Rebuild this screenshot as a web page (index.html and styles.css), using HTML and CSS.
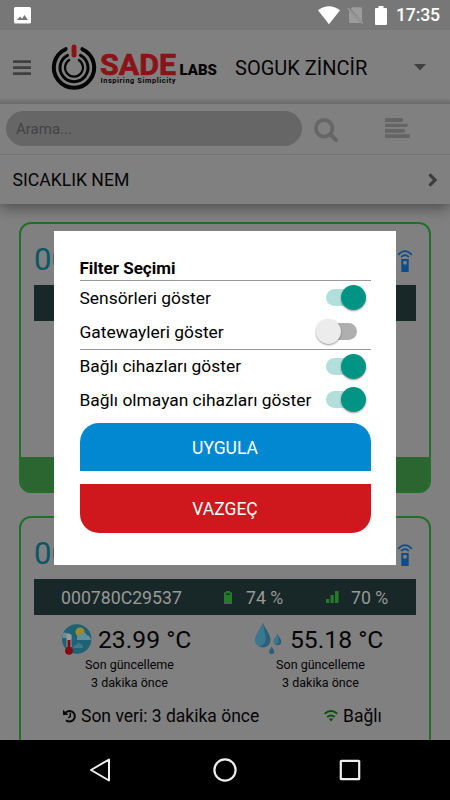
FILE: index.html
```html
<!DOCTYPE html>
<html lang="tr">
<head>
<meta charset="utf-8">
<title>Sade Labs</title>
<link rel="stylesheet" href="styles.css">
</head>
<body>
<svg class="defs" width="0" height="0">
  <symbol id="remote" viewBox="0 0 16 23">
    <path d="M1.2 4.8Q8-2.4 14.8 4.8M4 7Q8 3.2 12 7" fill="none" stroke="#104c8c" stroke-width="1.7"/>
    <path fill-rule="evenodd" fill="#104c8c" d="M4.3 9h7.4v13H4.3zM8 10.8a2 2 0 1 0 0 4a2 2 0 1 0 0-4z"/>
  </symbol>
</svg>
<div class="phone">
  <div class="status">
    <svg class="photo" width="17" height="17" viewBox="0 0 17 17"><rect width="17" height="16.5" rx="1.5" fill="#fff"/><path d="M3 13l3-3.6 2 2.3 2.5-3.7L14 13z" fill="#777"/></svg>
    <svg class="wifi" width="22" height="19" viewBox="0 0 22 19"><path d="M0 4.3Q11-4 22 4.3L11 18.2z" fill="#fff"/></svg>
    <svg class="sim" width="17" height="19" viewBox="0 0 17 19"><path d="M5 1.2h8.800q1.200 0 1.200 1.200v13L3.800 3zM2 4.700L14 17H3.200Q2 17 2 15.800z" fill="#9b9b9b"/><path d="M.7 2.3L15.8 17.6" stroke="#9b9b9b" stroke-width="1.4"/></svg>
    <svg class="batt" width="12" height="19" viewBox="0 0 12 19"><path d="M0 3Q0 2 1 2h2.5V0h5v2H11q1 0 1 1v15q0 1-1 1H1q-1 0-1-1z" fill="#fff"/></svg>
    <span class="clock">17:35</span>
  </div>
  <header class="header">
    <svg class="burger" width="18" height="16" viewBox="0 0 18 16"><path d="M0 1.6h18M0 7.7h18M0 13.6h18" stroke="#404040" stroke-width="2.8"/></svg>
    <svg class="logo" width="168" height="50" viewBox="0 0 168 50">
      <g fill="none" stroke="#050505">
        <path d="M14.6 5.2A20.2 20.2 0 1 0 31.4 5.2" stroke-width="4" stroke-linecap="round"/>
        <path d="M16.5 11.3A14 14 0 1 0 29.5 11.3" stroke-width="3" stroke-linecap="round"/>
        <path d="M18.2 16A9 9 0 1 0 27.8 16" stroke-width="2.2" stroke-linecap="round"/>
      </g>
      <rect x="20.6" y=".6" width="4.9" height="13" rx="2.4" fill="#8a1317"/>
      <text class="sade" x="49" y="31" textLength="76" lengthAdjust="spacingAndGlyphs">SADE</text>
      <text class="labs" x="128.5" y="31" textLength="37.500" lengthAdjust="spacingAndGlyphs">LABS</text>
      <text class="motto" x="49.500" y="39" textLength="75">Inspiring Simplicity</text>
    </svg>
    <span class="site">SOGUK ZİNCİR</span>
    <svg class="caret" width="12" height="7" viewBox="0 0 12 7"><path d="M0 0h12L6 6.5z" fill="#404040"/></svg>
  </header>
  <div class="search">
    <div class="field">Arama...</div>
    <svg class="lens" width="24" height="25" viewBox="0 0 24 25"><circle cx="10.2" cy="10.3" r="8.3" fill="none" stroke="#666" stroke-width="3.8"/><path d="M16.3 16.5L22 22" stroke="#666" stroke-width="4.2" stroke-linecap="round"/></svg>
    <svg class="lines" width="25" height="20" viewBox="0 0 25 20"><path d="M0 0h17l1 1v2l-1 1H0zM0 5.7h22l1 1v1l-1 1.200H0zM0 11h19l1 1v1.700l-1 1H0zM0 16.300h25V20H0z" fill="#656565"/></svg>
  </div>
  <div class="category">
    <span>SICAKLIK NEM</span>
    <svg width="10" height="14" viewBox="0 0 10 14"><path d="M1.5 1.4L7 7l-5.500 5.600" fill="none" stroke="#3d3d3d" stroke-width="3.2"/></svg>
  </div>
  <main class="list">
    <section class="card first">
      <div class="head"><span class="code">00</span><svg class="remote" width="16" height="23"><use href="#remote"/></svg></div>
      <div class="bar"></div>
      <div class="foot"></div>
    </section>
    <section class="card second">
      <div class="head"><span class="code">00</span><svg class="remote" width="16" height="23"><use href="#remote"/></svg></div>
      <div class="bar">
        <span class="id">000780C29537</span>
        <svg class="cell" width="8" height="13" viewBox="0 0 8 13"><path fill-rule="evenodd" d="M2 0h4v1.300h2V13H0V1.300h2zM1.800 2.500h4.400v1.300H1.800z" fill="#257a2c"/></svg>
        <span class="pct">74 %</span>
        <svg class="signal" width="13" height="12" viewBox="0 0 13 12"><path d="M0 8h3.300v4H0zM4.500 4h3.300v8H4.500zM9 0h3.500v12H9z" fill="#257a2c"/></svg>
        <span class="pct">70 %</span>
      </div>
      <div class="readings">
        <div class="reading temp">
          <div class="value">
            <svg width="31" height="31" viewBox="0 0 31 31">
              <circle cx="15.700" cy="15" r="14.700" fill="#1d6275"/>
              <circle cx="19" cy="8" r="4.600" fill="#9a8c2d"/>
              <path d="M2 9q5-2 9 5H1.200zM16 16q-1-5 3.500-5 1.500-3.500 5-2 1 1.500 1.500 2.300 3 0 4 4.700z" fill="#658d98"/>
              <path d="M12 24q0-3 3-3 2-4 4-1 3 0 3 4z" fill="#3f7889"/>
              <path d="M5.500 11q2.500-3 5 0v12h-5z" fill="#999"/><path d="M8 16v9" stroke="#850b12" stroke-width="3"/><circle cx="8" cy="26.800" r="3.900" fill="#850b12"/>
            </svg>
            <span>23.99 °C</span>
          </div>
          <p>Son güncelleme<br>3 dakika önce</p>
        </div>
        <div class="reading hum">
          <div class="value">
            <svg width="27" height="32" viewBox="0 0 27 32"><g fill="#2c6077"><path d="M8 0C9 4 15.500 11 15.500 17A7.500 7.500 0 0 1 .3 17C.3 11 7 4 8 0z"/><path d="M22.500 10.500c.5 3 3.800 5 3.800 8a3.800 3.800 0 0 1-7.600 0c0-3 3.300-5 3.800-8zM16.700 23.500c.4 2 2.600 3 2.600 5a2.600 2.600 0 0 1-5.300 0c0-2 2.300-3 2.700-5z"/></g><path d="M8 0C7 4 .3 11 .3 17q0 4 3.700 6.500Q13 21 10 11zM22.500 10.500c-.5 3-3.800 5-3.800 8q0 2 2 3.200 4-2 2.500-7z" fill="#397890"/></svg>
            <span>55.18 °C</span>
          </div>
          <p>Son güncelleme<br>3 dakika önce</p>
        </div>
      </div>
      <div class="meta">
        <svg width="14" height="14" viewBox="0 0 14 14"><path d="M2.500 3.800A5.300 5.300 0 1 1 3 11.200" fill="none" stroke="#080808" stroke-width="2"/><path d="M0 .8V6h5.300z" fill="#080808"/><path d="M7.300 3.700v3.700L5.300 9" fill="none" stroke="#080808" stroke-width="1.500"/></svg>
        <span class="last">Son veri: 3 dakika önce</span>
        <svg width="14" height="12" viewBox="0 0 14 12"><path d="M.7 3.700Q7-1.600 13.300 3.700M3.200 7Q7 3.900 10.800 7" fill="none" stroke="#064f0b" stroke-width="1.800"/><path d="M4.900 9Q7 7.400 9.100 9L7 11.600z" fill="#064f0b"/></svg>
        <span class="linked">Bağlı</span>
      </div>
    </section>
  </main>
  <nav class="nav">
    <svg width="24" height="24" viewBox="0 0 24 24"><path d="M21 1.500v21L3 12z" fill="none" stroke="#eee" stroke-width="2" stroke-linejoin="round"/></svg>
    <svg width="24" height="24" viewBox="0 0 24 24"><circle cx="12" cy="12" r="10.600" fill="none" stroke="#eee" stroke-width="2.200"/></svg>
    <svg width="24" height="24" viewBox="0 0 24 24"><rect x="2.800" y="2.800" width="18.400" height="18.400" rx=".5" fill="none" stroke="#eee" stroke-width="2.200"/></svg>
  </nav>
  <div class="modal">
    <h1>Filter Seçimi</h1>
    <div class="group">
      <div class="option"><span>Sensörleri göster</span><i class="switch on"></i></div>
      <div class="option"><span>Gatewayleri göster</span><i class="switch"></i></div>
    </div>
    <div class="group">
      <div class="option"><span>Bağlı cihazları göster</span><i class="switch on"></i></div>
      <div class="option"><span>Bağlı olmayan cihazları göster</span><i class="switch on"></i></div>
    </div>
    <button class="apply">UYGULA</button>
    <button class="cancel">VAZGEÇ</button>
  </div>
</div>
</body>
</html>
```
FILE: styles.css
```css
* { box-sizing: border-box; }
body { margin: 0; background: #808080; font-family: Roboto, sans-serif; color: #050505; }
svg { display: block; flex: none; }
.defs { position: absolute; }
.phone { position: relative; width: 450px; height: 800px; overflow: hidden; display: flex; flex-direction: column; }

.status { height: 30px; flex: none; background: #777; display: flex; align-items: center; padding: 0 10px 0 14px; color: #fff; }
.wifi { margin-left: 287px; }
.sim { margin-left: 7px; }
.batt { margin-left: 11px; }
.clock { margin-left: 9px; padding-top: 1px; font-size: 17.700px; font-weight: 500; line-height: 29px; letter-spacing: -0.2px; white-space: nowrap; }

.header { height: 74px; flex: none; display: flex; align-items: center; padding-left: 13px; background: linear-gradient(#808080 68px, #696969 74px); }
.burger { margin-top: 1px; }
.logo { margin-left: 20px; margin-top: 3px; overflow: visible; }
.sade { font: 700 30px Roboto, sans-serif; fill: #8a1317; stroke: #8a1317; stroke-width: .7px; }
.labs { font: 900 15px Roboto, sans-serif; fill: #050505; }
.motto { font: 700 7.400px Roboto, sans-serif; fill: #050505; }
.site { margin-left: 16px; width: 134px; font-size: 20px; line-height: 30px; white-space: nowrap; padding-top: 1px; }
.caret { margin-left: 45px; }

.search { height: 51px; flex: none; display: flex; align-items: flex-start; padding: 7px 0 0 6px; border-bottom: 1px solid #737373; }
.field { width: 296px; height: 35px; border-radius: 18px; background: #666; color: #434343; font-size: 15px; line-height: 36px; padding-left: 10px; }
.lens { margin: 7px 0 0 12px; }
.lines { margin: 7px 0 0 47px; }

.category { height: 49px; flex: none; display: flex; align-items: center; justify-content: space-between; padding: 0 12px 0 12.500px; font-size: 17.600px; box-shadow: 0 3px 14px rgba(0, 0, 0, .45); background: #808080; clip-path: inset(0 0 -24px 0); }
.category span { white-space: nowrap; padding-top: 1px; }

.list { flex: 1; min-height: 0; overflow: hidden; padding: 18px 19px 0; display: flex; flex-direction: column; gap: 23px; }
.card { flex: none; border: 2px solid #207029; border-radius: 12px; padding: 0 13px; display: flex; flex-direction: column; }
.first { height: 271px; }
.second { height: 290px; }
.head { height: 61px; display: flex; justify-content: space-between; align-items: center; padding-top: 14px; }
.code { font-size: 31px; line-height: 36px; padding-bottom: 4px; color: #075767; }
.remote { margin-right: 3px; }
.bar { height: 36px; flex: none; background: #182828; color: #999; display: flex; align-items: center; font-size: 17.700px; padding-left: 27px; white-space: nowrap; }
.bar span { padding-top: 1px; }
.id { width: 122px; }
.cell { margin-left: 41px; }
.pct { width: 38px; margin-left: 14px; }
.signal { margin-left: 42px; }
.signal + .pct { margin-left: 12px; }
.foot { height: 34px; margin: auto -13px 0; background: #2b6630; border-radius: 0 0 9px 9px; }

.readings { display: flex; padding-top: 8px; }
.reading p { margin: 1px 0 0; font-size: 12.500px; line-height: 17.600px; text-align: center; }
.temp { width: 131px; margin-left: 27px; }
.hum { width: 129px; margin-left: 63px; }
.value { display: flex; align-items: center; height: 32px; font-size: 24.700px; white-space: nowrap; }
.value span { margin-left: 6px; padding-top: 1px; }
.hum .value span { margin-left: 8px; }
.temp p { padding-left: 6px; }
.hum p { padding-left: 2px; }
.meta { display: flex; align-items: center; padding-left: 29px; margin-top: 14px; font-size: 17.500px; line-height: 22px; white-space: nowrap; }
.last { width: 179px; margin-left: 4px; }
.meta .last + svg { margin-left: 64px; }
.linked { margin-left: 5px; }

.nav { height: 60px; flex: none; background: #000; display: flex; align-items: center; justify-content: space-between; padding: 0 88px; }

.modal { position: absolute; left: 54px; top: 230.500px; width: 342px; height: 334px; background: #fff; color: #000; padding: 26.500px 25px 0 25.500px; font-size: 17.400px; }
.modal h1 { margin: 0; height: 22.500px; line-height: 22px; font-size: 17px; font-weight: 700; }
.group { border-top: 1px solid #999; height: 69px; }
.option { height: 34px; display: flex; align-items: center; justify-content: space-between; white-space: nowrap; }
.group + .group .option { height: 33.500px; }
.switch { position: relative; width: 31px; height: 17px; margin-right: 14px; border-radius: 9px; background: #afafaf; }
.switch::after { content: ""; position: absolute; left: -10px; top: -4px; width: 25px; height: 25px; border-radius: 50%; background: #ececec; box-shadow: 0 1px 2px rgba(0, 0, 0, .4); }
.switch.on { width: 36px; margin-right: 9px; background: #b2dfdb; }
.switch.on::after { left: 15px; background: #009485; }
button { display: block; width: 291px; height: 48.500px; border: 0; padding: 2px 0 0; color: #fff; font: 17.500px Roboto, sans-serif; }
.apply { margin-top: 5px; background: #0288d1; border-radius: 19px 19px 0 0; }
.cancel { margin-top: 13px; background: #cf171e; border-radius: 0 0 19px 19px; }
```
